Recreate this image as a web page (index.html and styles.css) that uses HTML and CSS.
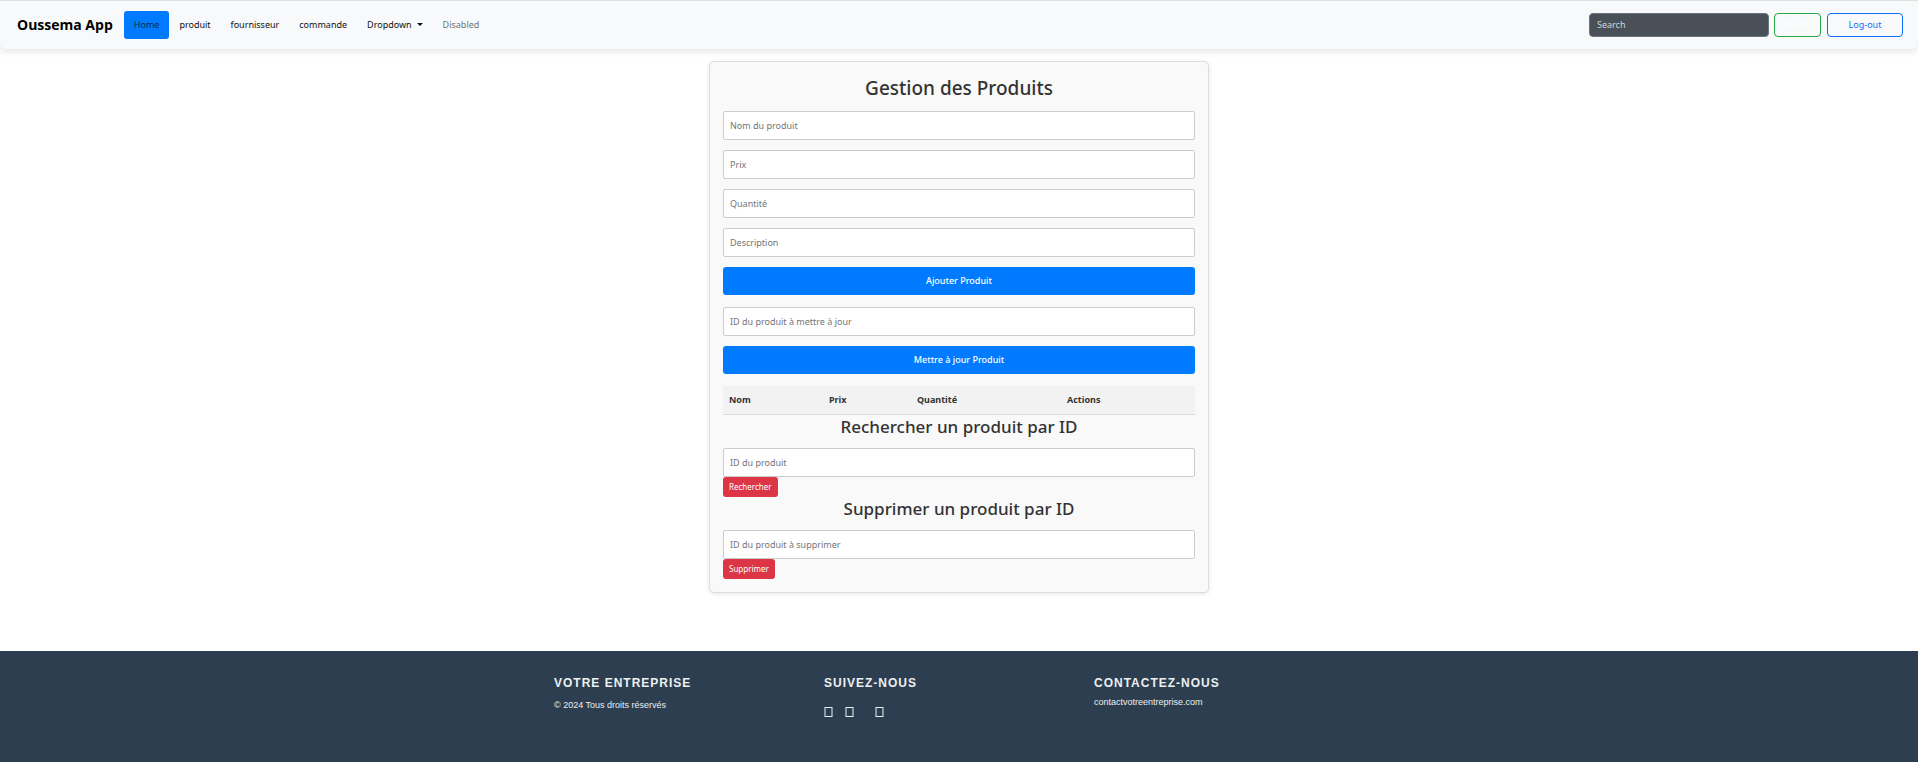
FILE: index.html
```html
<!DOCTYPE html>
<html lang="fr">
<head>
<meta charset="utf-8">
<title>Oussema App</title>
<link rel="stylesheet" href="styles.css">
</head>
<body>
<header class="navbar">
  <a class="brand" href="#">Oussema App</a>
  <nav class="nav">
    <a class="nav-link active" href="#">Home</a>
    <a class="nav-link" href="#">produit</a>
    <a class="nav-link" href="#">fournisseur</a>
    <a class="nav-link" href="#">commande</a>
    <a class="nav-link dropdown" href="#">Dropdown</a>
    <a class="nav-link disabled" aria-disabled="true">Disabled</a>
  </nav>
  <form class="search">
    <input class="search-input" type="search" placeholder="Search" aria-label="Search">
    <button class="btn-outline btn-search" type="button">Search</button>
    <button class="btn-outline btn-logout" type="button">Log-out</button>
  </form>
</header>

<main class="card">
  <h2 class="title">Gestion des Produits</h2>
  <form class="form">
    <input class="field" type="text" placeholder="Nom du produit" aria-label="Nom du produit">
    <input class="field" type="text" placeholder="Prix" aria-label="Prix">
    <input class="field" type="text" placeholder="Quantité" aria-label="Quantité">
    <input class="field" type="text" placeholder="Description" aria-label="Description">
    <button class="btn-primary" type="button">Ajouter Produit</button>
  </form>
  <form class="form">
    <input class="field" type="text" placeholder="ID du produit à mettre à jour" aria-label="ID du produit à mettre à jour">
    <button class="btn-primary" type="button">Mettre à jour Produit</button>
  </form>
  <table class="products">
    <thead>
      <tr><th class="col-name">Nom</th><th class="col-price">Prix</th><th class="col-qty">Quantité</th><th>Actions</th></tr>
    </thead>
  </table>
  <section>
    <h3 class="subtitle">Rechercher un produit par ID</h3>
    <input class="field" type="text" placeholder="ID du produit" aria-label="ID du produit">
    <button class="btn-danger" type="button">Rechercher</button>
  </section>
  <section>
    <h3 class="subtitle">Supprimer un produit par ID</h3>
    <input class="field" type="text" placeholder="ID du produit à supprimer" aria-label="ID du produit à supprimer">
    <button class="btn-danger" type="button">Supprimer</button>
  </section>
</main>

<footer class="footer">
  <div class="footer-grid">
    <div>
      <h4 class="footer-title">VOTRE ENTREPRISE</h4>
      <p class="copyright">© 2024 Tous droits réservés</p>
    </div>
    <div>
      <h4 class="footer-title">SUIVEZ-NOUS</h4>
      <div class="social">
        <a class="social-link" href="#" aria-label="Facebook"><svg width="9" height="10" viewBox="0 0 9 10"><rect x="1" y=".5" width="7" height="9"/></svg></a>
        <a class="social-link" href="#" aria-label="Twitter"><svg width="9" height="10" viewBox="0 0 9 10"><rect x="1" y=".5" width="7" height="9"/></svg></a>
        <a class="social-link spaced" href="#" aria-label="Instagram"><svg width="9" height="10" viewBox="0 0 9 10"><rect x="1" y=".5" width="7" height="9"/></svg></a>
      </div>
    </div>
    <div>
      <h4 class="footer-title">CONTACTEZ-NOUS</h4>
      <p class="contact">contactvotreentreprise.com</p>
    </div>
  </div>
</footer>
</body>
</html>
```

FILE: styles.css
```css
* { box-sizing: border-box; }

body {
  margin: 0;
  min-height: 100vh;
  display: flex;
  flex-direction: column;
  background: #fff;
  color: #333;
  font: 9px/14px "Noto Sans", "Open Sans", sans-serif;
}

h2, h3, h4, p { margin: 0; }
a { color: inherit; text-decoration: none; }
input, button { font: inherit; }

.navbar {
  display: flex;
  align-items: center;
  padding: 10px 15px 10px 17px;
  border-top: 1px solid #dee2e0;
  border-radius: 0 0 6px 6px;
  background: #f8f9fa;
  box-shadow: 0 3px 7px rgba(0, 0, 0, .1);
}
.brand { margin-right: 11px; color: #000; font-family: "Open Sans", sans-serif; font-size: 14px; font-weight: 700; }
.nav { display: flex; }
.nav-link { padding: 7px 10px; border-radius: 3px; color: #111; }
.nav-link.active { background: #007bff; color: #0a2a4a; }
.nav-link.disabled { color: #6c757d; }
.dropdown::after {
  content: "";
  display: inline-block;
  margin-left: 5px;
  vertical-align: 2px;
  border: 3px solid transparent;
  border-top-color: #111;
  border-bottom: 0;
}

.search { display: flex; margin-left: auto; height: 24px; }
.search-input {
  width: 180px;
  margin-right: 5px;
  padding: 0 7px;
  border: 1px solid #6c757d;
  border-radius: 4px;
  background: #495057;
  color: #fff;
}
.search-input::placeholder { color: #d3d5d7; }
.btn-outline { padding: 0; border: 1px solid; border-radius: 4px; background: transparent; }
.btn-search { width: 47px; margin-right: 6px; border-color: #28a745; color: #fff; }
.btn-logout { width: 76px; border-color: #0d6efd; color: #0d6efd; }

.card {
  width: 100%;
  max-width: 500px;
  margin: 12px auto 58px;
  padding: 13px;
  border: 1px solid #ddd;
  border-radius: 5px;
  background: #f9f9f9;
  box-shadow: 0 1px 4px rgba(0, 0, 0, .1);
}
.title { margin-bottom: 10px; font-size: 19px; font-weight: 500; line-height: 26px; text-align: center; }
.subtitle { margin-bottom: 10px; font-size: 17px; font-weight: 500; line-height: 23px; text-align: center; }
.form { display: flex; flex-direction: column; gap: 10px; margin-bottom: 12px; }
.field {
  display: block;
  width: 100%;
  height: 29px;
  padding: 0 6px;
  border: 1px solid #ccc;
  border-radius: 2px;
  background: #fff;
}
.field::placeholder { color: #757575; }
.btn-primary { height: 28px; border: 0; border-radius: 3px; background: #007bff; color: #fff; font-weight: 500; }
.btn-danger {
  display: block;
  height: 20px;
  padding: 0 6px;
  border: 0;
  border-radius: 3px;
  background: #dc3545;
  color: #fff;
  font-size: 8px;
}

.products { width: 100%; border-collapse: collapse; }
.products th { height: 28px; padding: 0 6px; border-bottom: 1px solid #ddd; background: #f2f2f2; font-weight: 700; text-align: left; }
.col-name { width: 100px; }
.col-price { width: 88px; }
.col-qty { width: 150px; }

.footer {
  flex: 1;
  padding: 24px 15px 45px;
  background: #2c3e50;
  color: #ecf0f1;
  font-family: "Liberation Sans", Arial, sans-serif;
}
.footer-grid { display: grid; grid-template-columns: repeat(3, 1fr); max-width: 810px; margin: 0 auto; }
.footer-title { font-size: 12px; font-weight: 700; letter-spacing: 1px; line-height: 16px; }
.copyright { margin-top: 7px; }
.contact { margin-top: 4px; }
.social { display: flex; gap: 12px; margin-top: 16px; }
.social-link svg { display: block; fill: none; stroke: currentColor; }
.spaced { margin-left: 9px; }
```
